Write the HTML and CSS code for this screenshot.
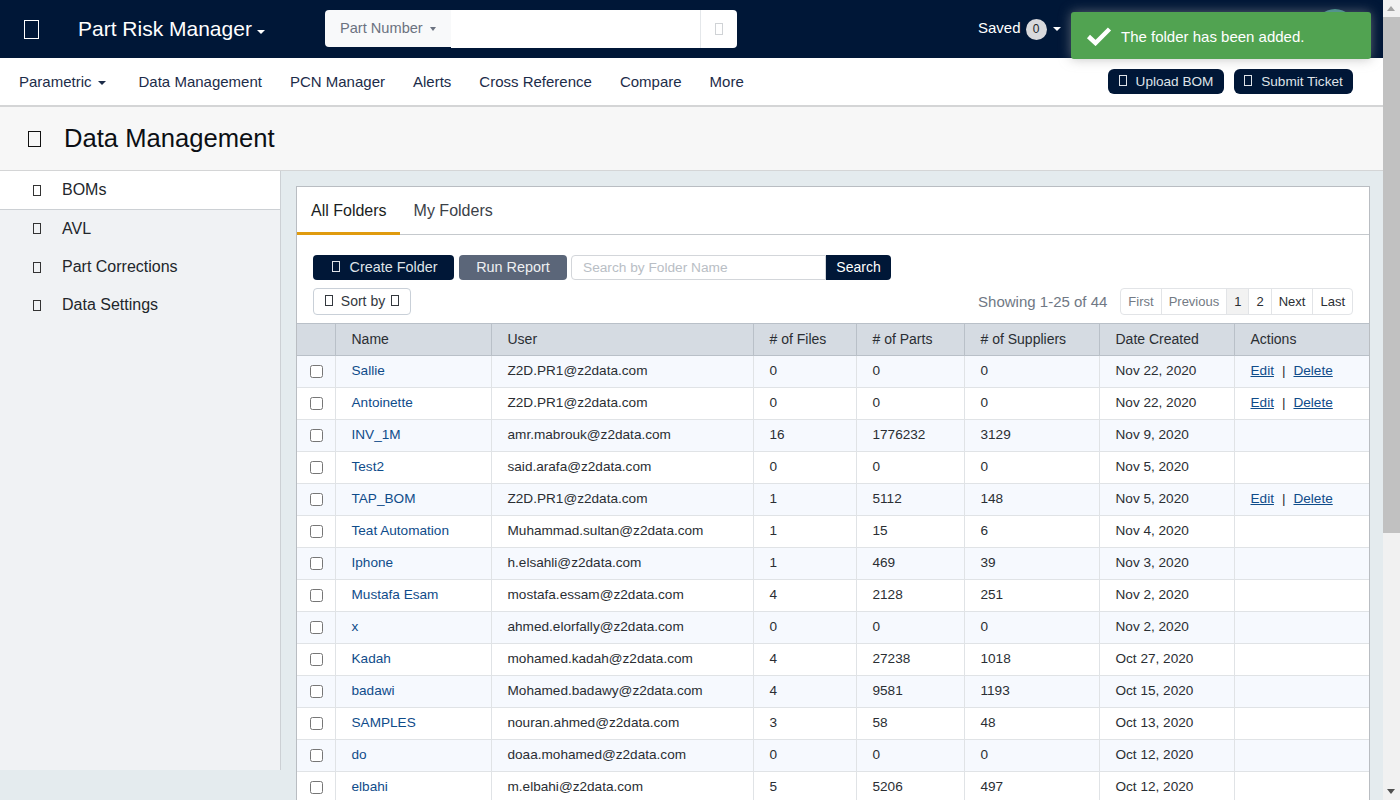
FILE: index.html
```html
<!DOCTYPE html>
<html><head><meta charset="utf-8"><title>Data Management</title>
<link rel="stylesheet" href="styles.css">
</head><body>
<div id="page">
<div id="topbar">
   <i class="ico ico-menu"></i>
   <a class="brand">Part Risk Manager<b class="caret"></b></a>
   <div id="finder">
      <span class="finder-type">Part Number<b class="caret"></b></span>
      <span class="finder-input"></span>
      <span class="finder-go"><i class="ico ico-find"></i></span>
   </div>
   <a class="saved">Saved <span class="count">0</span><b class="caret"></b></a>
   <span class="avatar"></span>
</div>
<div id="menu">
   <a class="first">Parametric<b class="caret"></b></a>
   <a>Data Management</a>
   <a>PCN Manager</a>
   <a>Alerts</a>
   <a>Cross Reference</a>
   <a>Compare</a>
   <a>More</a>
   <span class="spring"></span>
   <btn class="dark pill pill-upload"><i class="ico"></i>Upload BOM</btn>
   <btn class="dark pill pill-ticket"><i class="ico"></i>Submit Ticket</btn>
</div>
<div id="title"><i class="ico ico-title"></i><h1>Data Management</h1></div>
<div id="main">
   <div id="side">
      <a class="on"><i class="ico"></i>BOMs</a>
      <a><i class="ico"></i>AVL</a>
      <a><i class="ico"></i>Part Corrections</a>
      <a><i class="ico"></i>Data Settings</a>
   </div>
   <div id="panel">
      <div id="tabs">
         <a class="on">All Folders</a>
         <a>My Folders</a>
      </div>
      <div id="tools">
         <btn class="dark big"><i class="ico"></i>Create Folder</btn>
         <btn class="grey big">Run Report</btn>
         <span class="search"><span class="search-box">Search by Folder Name</span><btn class="dark search-go">Search</btn></span>
      </div>
      <div id="tools2">
         <btn class="sort"><i class="ico"></i>Sort by<i class="ico ico-after"></i></btn>
         <span class="showing">Showing 1-25 of 44</span>
         <div id="pager">
            <a class="off">First</a><a class="off">Previous</a><a class="cur">1</a><a>2</a><a>Next</a><a>Last</a>
         </div>
      </div>
      <table id="grid">
         <colgroup>
            <col class="c-check"><col class="c-name"><col class="c-user"><col class="c-files"><col class="c-parts"><col class="c-supp"><col class="c-date"><col class="c-act">
         </colgroup>
         <thead><tr><th></th><th>Name</th><th>User</th><th># of Files</th><th># of Parts</th><th># of Suppliers</th><th>Date Created</th><th>Actions</th></tr></thead>
         <tbody id="rows">
            <tr><td><input type="checkbox"></td><td><a>Sallie</a></td><td>Z2D.PR1@z2data.com</td><td>0</td><td>0</td><td>0</td><td>Nov 22, 2020</td><td><a class="u">Edit</a><span class="bar">|</span><a class="u">Delete</a></td></tr>
            <tr><td><input type="checkbox"></td><td><a>Antoinette</a></td><td>Z2D.PR1@z2data.com</td><td>0</td><td>0</td><td>0</td><td>Nov 22, 2020</td><td><a class="u">Edit</a><span class="bar">|</span><a class="u">Delete</a></td></tr>
            <tr><td><input type="checkbox"></td><td><a>INV_1M</a></td><td>amr.mabrouk@z2data.com</td><td>16</td><td>1776232</td><td>3129</td><td>Nov 9, 2020</td><td></td></tr>
            <tr><td><input type="checkbox"></td><td><a>Test2</a></td><td>said.arafa@z2data.com</td><td>0</td><td>0</td><td>0</td><td>Nov 5, 2020</td><td></td></tr>
            <tr><td><input type="checkbox"></td><td><a>TAP_BOM</a></td><td>Z2D.PR1@z2data.com</td><td>1</td><td>5112</td><td>148</td><td>Nov 5, 2020</td><td><a class="u">Edit</a><span class="bar">|</span><a class="u">Delete</a></td></tr>
            <tr><td><input type="checkbox"></td><td><a>Teat Automation</a></td><td>Muhammad.sultan@z2data.com</td><td>1</td><td>15</td><td>6</td><td>Nov 4, 2020</td><td></td></tr>
            <tr><td><input type="checkbox"></td><td><a>Iphone</a></td><td>h.elsahli@z2data.com</td><td>1</td><td>469</td><td>39</td><td>Nov 3, 2020</td><td></td></tr>
            <tr><td><input type="checkbox"></td><td><a>Mustafa Esam</a></td><td>mostafa.essam@z2data.com</td><td>4</td><td>2128</td><td>251</td><td>Nov 2, 2020</td><td></td></tr>
            <tr><td><input type="checkbox"></td><td><a>x</a></td><td>ahmed.elorfally@z2data.com</td><td>0</td><td>0</td><td>0</td><td>Nov 2, 2020</td><td></td></tr>
            <tr><td><input type="checkbox"></td><td><a>Kadah</a></td><td>mohamed.kadah@z2data.com</td><td>4</td><td>27238</td><td>1018</td><td>Oct 27, 2020</td><td></td></tr>
            <tr><td><input type="checkbox"></td><td><a>badawi</a></td><td>Mohamed.badawy@z2data.com</td><td>4</td><td>9581</td><td>1193</td><td>Oct 15, 2020</td><td></td></tr>
            <tr><td><input type="checkbox"></td><td><a>SAMPLES</a></td><td>nouran.ahmed@z2data.com</td><td>3</td><td>58</td><td>48</td><td>Oct 13, 2020</td><td></td></tr>
            <tr><td><input type="checkbox"></td><td><a>do</a></td><td>doaa.mohamed@z2data.com</td><td>0</td><td>0</td><td>0</td><td>Oct 12, 2020</td><td></td></tr>
            <tr><td><input type="checkbox"></td><td><a>elbahi</a></td><td>m.elbahi@z2data.com</td><td>5</td><td>5206</td><td>497</td><td>Oct 12, 2020</td><td></td></tr>
         </tbody>
      </table>
   </div>
</div>
</div>
<div id="toast">
   <svg width="26" height="20" viewBox="0 0 26 20"><path d="M2.5 10.5 L9.5 17 L23.5 3" fill="none" stroke="#fff" stroke-width="4.5"/></svg>
   <span>The folder has been added.</span>
</div>
<div id="scroll"><span class="up"></span><span class="thumb"></span><span class="down"></span></div>
</body></html>
```

FILE: styles.css
```css
html, body { margin: 0; height: 100%; overflow: hidden; }
body
{
	font-family: "Liberation Sans", Arial, sans-serif;
	font-size: 14px;
	color: #212529;
	background-color: #e4ebee;
}
a { color: inherit; text-decoration: none; }
#page { width: 1384px; height: 800px; overflow: hidden; }

/* missing-glyph boxes, the icon font did not load in the shot */
.ico
{
	display: inline-block;
	box-sizing: border-box;
	width: 8px;
	height: 11px;
	border: 1px solid currentColor;
	flex: none;
}
.caret
{
	display: inline-block;
	border-top: 4px solid currentColor;
	border-left: 4px solid transparent;
	border-right: 4px solid transparent;
	margin-left: 6px;
	vertical-align: 2px;
}

#topbar
{
	display: flex;
	align-items: center;
	height: 58px;
	background-color: #001737;
	color: #fff;
}
.ico-menu { width: 15px; height: 19px; margin-left: 24px; }
.brand { font-size: 21px; margin-left: 39px; width: 247px; }
.brand .caret { margin-left: 5px; }
#finder { display: flex; width: 412px; height: 38px; margin-top: -1px; }
.finder-type
{
	width: 126px;
	box-sizing: border-box;
	padding-left: 15px;
	line-height: 36px;
	height: 37px;
	font-size: 14.6px;
	color: #6b7280;
	background-color: #f8f9fa;
	border-radius: 4px 0 0 4px;
}
.finder-type .caret { border-width: 4px 3.5px 0; margin-left: 7px; }
.finder-input { flex: 1; background-color: #fff; }
.finder-go
{
	display: flex;
	align-items: center;
	justify-content: center;
	width: 37px;
	box-sizing: border-box;
	border-left: 1px solid #e4e7ea;
	background-color: #fff;
	color: #d0d3d6;
	border-radius: 0 4px 4px 0;
}
.ico-find { width: 8px; height: 12px; }
.saved { margin-left: 241px; font-size: 15px; }
.count
{
	display: inline-block;
	width: 21px;
	height: 21px;
	line-height: 21px;
	border-radius: 50%;
	margin-left: 1px;
	text-align: center;
	font-size: 12px;
	color: #212529;
	background-color: #d8d9dc;
}
.avatar
{
	width: 40px;
	height: 40px;
	margin-left: 254px;
	border-radius: 50%;
	background-color: #3b8f8a;
}

#menu
{
	display: flex;
	align-items: center;
	height: 47px;
	padding-left: 19px;
	background-color: #fff;
	border-bottom: 2px solid #d4d5d6;
	font-size: 15px;
	color: #1c2c49;
}
#menu a { margin-right: 28px; }
#menu a.first { margin-right: 33px; }
.spring { flex: 1; }

btn
{
	display: inline-block;
	box-sizing: border-box;
	cursor: pointer;
	white-space: nowrap;
	text-align: center;
}
btn .ico { margin-right: 10px; }
.dark { color: #dfe3e8; background-color: #001737; }
.pill
{
	height: 25px;
	line-height: 25px;
	margin-right: 10px;
	border-radius: 6px;
	font-size: 13.6px;
}
.pill .ico { margin-right: 9px; }
.pill-upload { width: 116px; }
.pill-ticket { width: 119px; margin-right: 31px; }

#title
{
	display: flex;
	align-items: center;
	height: 63px;
	background-color: #f7f7f7;
	border-bottom: 1px solid #d4d5d6;
}
.ico-title { width: 13px; height: 16px; margin-left: 28px; color: #111; }
#title h1 { margin: 0 0 0 23px; font-size: 25.6px; font-weight: 400; color: #0c0f14; }

#main { display: flex; align-items: flex-start; }
#side
{
	width: 280px;
	height: 599px;
	flex: none;
	background-color: #f0f2f4;
	border-right: 1px solid #ccd0d4;
	font-size: 16px;
	color: #22262b;
}
#side a { display: flex; align-items: center; height: 38px; }
#side a.on { height: 39px; background-color: #fff; border-bottom: 1px solid #ccd0d4; box-sizing: border-box; }
#side a:nth-child(2) { height: 37px; margin-bottom: 1px; }
#side .ico { margin: 0 21px 0 33px; color: #333; }

#panel
{
	width: 1074px;
	margin: 15px 0 0 15px;
	background-color: #fff;
	border: 1px solid #b9bdc2;
	box-sizing: border-box;
	height: 700px;
}
#tabs { display: flex; height: 47px; border-bottom: 1px solid #c5c9cd; font-size: 16px; color: #3b4148; }
#tabs a { display: block; padding: 15px 14px 0; height: 32px; }
#tabs a.on { color: #1a1d21; height: 30px; border-bottom: 3px solid #e09b0e; padding-right: 13px; }
#tools { display: flex; align-items: center; margin: 20px 0 0 16px; height: 25px; }
.big { height: 25px; line-height: 25px; border-radius: 4px; margin-right: 5px; font-size: 14.4px; }
.dark.big { width: 141px; }
.dark.big .ico { margin: 0 10px 0 2px; }
.grey { width: 108px; color: #eef0f2; background-color: #5b6679; margin-right: 4px; }
.search { display: flex; height: 25px; }
.search-box
{
	box-sizing: border-box;
	width: 255px;
	padding-left: 11px;
	line-height: 23px;
	border: 1px solid #d3d6da;
	border-radius: 4px 0 0 4px;
	font-size: 13.7px;
	color: #b9bec5;
}
.search-go { width: 65px; line-height: 25px; border-radius: 0 4px 4px 0; color: #fff; }

#tools2 { display: flex; align-items: center; height: 27px; margin: 8px 16px 8px 16px; }
.sort
{
	width: 98px;
	height: 27px;
	line-height: 25px;
	border: 1px solid #c9d0d8;
	border-radius: 4px;
	color: #33383e;
}
.sort .ico { margin-right: 8px; }
.sort .ico-after { margin: 0 0 0 6px; }
.showing { margin-left: auto; font-size: 15px; color: #707884; margin-right: 13px; }
#pager { display: flex; height: 27px; border: 1px solid #e2e4e7; border-radius: 4px; box-sizing: border-box; font-size: 13px; color: #2a2e33; }
#pager a { display: block; padding: 0 7px; line-height: 25px; border-left: 1px solid #e2e4e7; }
#pager a:first-child { border-left: 0; }
#pager .off { color: #737a84; }
#pager .cur { background-color: #f2f2f2; }

#grid { width: 1072px; table-layout: fixed; border-collapse: collapse; color: #2a2e33; }
.c-check { width: 38px; }
.c-name { width: 156px; }
.c-user { width: 262px; }
.c-files { width: 103px; }
.c-parts { width: 108px; }
.c-supp { width: 135px; }
.c-date { width: 135px; }
.c-act { width: 135px; }
#grid th
{
	height: 32px;
	padding: 0 0 1px 16px;
	text-align: left;
	font-weight: 400;
	background-color: #d5dbe2;
	border: 1px solid #b9c0c8;
	box-sizing: border-box;
}
#grid th:first-child, #grid td:first-child { padding: 0; text-align: center; border-left: 0; }
#grid th:last-child, #grid td:last-child { border-right: 0; }
#grid td
{
	height: 32px;
	padding: 0 0 3px 16px;
	box-sizing: border-box;
	border: 1px solid #e0e3e6;
	font-size: 13.6px;
}
#grid tbody tr:nth-child(odd) { background-color: #f6f9fe; }
#grid td a { color: #0f4c8a; }
#grid td a.u { text-decoration: underline; }
#grid input { margin: 0 0 1px 13px; width: 13px; height: 13px; display: block; }
.bar { margin: 0 8px; }

#toast
{
	position: absolute;
	left: 1071px;
	top: 12px;
	width: 300px;
	height: 47px;
	display: flex;
	align-items: center;
	box-sizing: border-box;
	padding-left: 15px;
	background-color: #51a351;
	color: #fff;
	font-size: 15px;
	border-radius: 3px;
	box-shadow: 0 0 12px rgba(153, 153, 153, .6);
}
#toast span { margin: 2px 0 0 9px; }

#scroll
{
	position: absolute;
	top: 0;
	right: 0;
	width: 17px;
	height: 800px;
	background-color: #f1f1f1;
}
#scroll .up, #scroll .down
{
	position: absolute;
	left: 4px;
	border-left: 4px solid transparent;
	border-right: 4px solid transparent;
}
#scroll .up { top: 6px; border-bottom: 5px solid #a3a3a3; }
#scroll .down { bottom: 6px; border-top: 5px solid #505050; }
#scroll .thumb
{
	position: absolute;
	top: 17px;
	left: 0;
	width: 17px;
	height: 516px;
	background-color: #c1c1c1;
}
```
